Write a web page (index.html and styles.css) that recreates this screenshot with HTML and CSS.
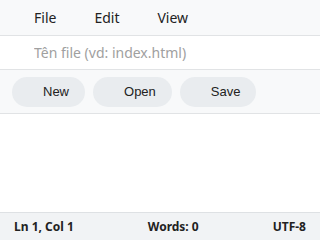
FILE: index.html
```html
<!DOCTYPE html>
<html lang="vi">
<head>
  <meta charset="UTF-8" />
  <meta name="viewport" content="width=device-width, initial-scale=1.0"/>
  <title>Editor</title>
  <link rel="stylesheet" href="styles.css">
</head>
<body>
  <div class="app">
    <nav class="menu-bar">
      <span class="menu-item">File</span>
      <span class="menu-item">Edit</span>
      <span class="menu-item">View</span>
    </nav>

    <div class="file-row">
      <input type="text" class="file-name" placeholder="Tên file (vd: index.html)">
    </div>

    <div class="toolbar">
      <button class="tool-btn">New</button>
      <button class="tool-btn">Open</button>
      <button class="tool-btn">Save</button>
    </div>

    <textarea class="editor"></textarea>

    <footer class="status-bar">
      <span>Ln 1, Col 1</span>
      <span>Words: 0</span>
      <span>UTF-8</span>
    </footer>
  </div>
</body>
</html>
```

FILE: styles.css
```css
html, body {
  margin: 0;
  padding: 0;
  height: 100%;
}

body {
  font-family: "Noto Sans", sans-serif;
  color: #222;
  background-color: #ffffff;
}

.app {
  display: flex;
  flex-direction: column;
  height: 100%;
}

.menu-bar {
  display: flex;
  align-items: center;
  height: 36px;
  padding-left: 15px;
  background-color: #f8f9fa;
  border-bottom: 1px solid #e1e3e5;
  box-sizing: border-box;
}

.menu-item {
  padding: 0 19px;
  font-size: 14px;
  color: #222;
}

.file-row {
  height: 34px;
  border-bottom: 1px solid #e1e3e5;
  box-sizing: border-box;
}

.file-name {
  width: 100%;
  height: 100%;
  box-sizing: border-box;
  border: none;
  outline: none;
  padding: 0 34px;
  font-family: "Noto Sans", sans-serif;
  font-size: 14px;
  color: #222;
  background: #ffffff;
}

.file-name::placeholder {
  color: #a0a0a0;
}

.toolbar {
  display: flex;
  align-items: center;
  gap: 8px;
  height: 44px;
  padding: 0 12px;
  background-color: #f8f9fa;
  border-bottom: 1px solid #e1e3e5;
  box-sizing: border-box;
}

.tool-btn {
  height: 30px;
  padding: 0 16px 0 31px;
  border: none;
  border-radius: 15px;
  background-color: #e9ecef;
  font-family: "Liberation Sans", Arial, sans-serif;
  font-size: 13px;
  color: #222;
  cursor: pointer;
}

.editor {
  flex: 1;
  border: none;
  outline: none;
  resize: none;
  margin: 0;
  padding: 10px;
  background: #ffffff;
}

.status-bar {
  display: flex;
  justify-content: space-between;
  align-items: center;
  height: 28px;
  padding: 0 14px;
  background-color: #f1f3f5;
  border-top: 1px solid #dee1e4;
  font-size: 12px;
  font-weight: bold;
  color: #222;
  box-sizing: border-box;
}
```
